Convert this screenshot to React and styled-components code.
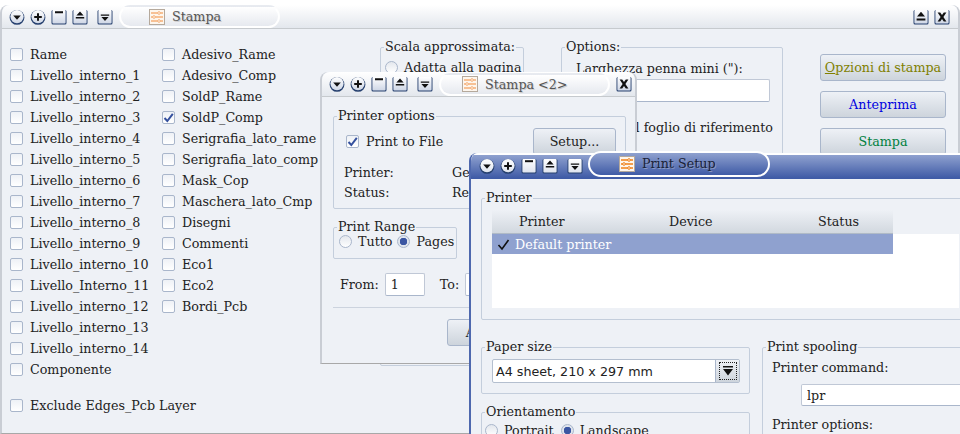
import styled, { createGlobalStyle } from 'styled-components';

const GlobalStyle = createGlobalStyle`
  html, body {
    margin: 0;
    padding: 0;
    background: #fff;
  }
  body {
    font-family: "DejaVu Serif", serif;
    font-size: 12.7px;
    color: #222;
  }
`;

const Desktop = styled.div`
  position: relative;
  width: 960px;
  height: 434px;
  overflow: hidden;
  background: #fff;
`;

const Window = styled.div`
  position: absolute;
  left: ${(p) => p.$left}px;
  top: ${(p) => p.$top}px;
  width: ${(p) => p.$width}px;
  height: ${(p) => p.$height}px;
  box-sizing: border-box;
  display: flex;
  flex-direction: column;
  background: #eef1f6;
  border-radius: 8px 8px 0 0;
  border-left: 2px solid ${(p) => (p.$active ? '#4e68ae' : '#c9cdd4')};
  border-right: 2px solid ${(p) => (p.$active ? '#4e68ae' : '#c9cdd4')};
  border-bottom: 1px solid #a8a8a8;
  overflow: ${(p) => (p.$active ? 'visible' : 'hidden')};
`;

const TitleBar = styled.div`
  flex: none;
  height: ${(p) => p.$height}px;
  box-sizing: border-box;
  display: flex;
  align-items: center;
  padding-left: ${(p) => p.$pad}px;
  border-radius: 8px 8px 0 0;
  background: ${(p) =>
    p.$active
      ? 'linear-gradient(#fff 0 2px, #8fa1cf 2px, #3f5ba6)'
      : 'linear-gradient(#ffffff, #e3e7ed)'};
  border-bottom: 1px solid ${(p) => (p.$active ? '#3f5ba6' : '#c6cace')};
`;

const Buttons = styled.div`
  display: flex;
  align-items: center;
  gap: 5px;
  margin: 0 ${(p) => p.$right || 0}px 0 ${(p) => p.$left || 0}px;
`;

const LeftButtons = styled(Buttons)`
  > :last-child {
    margin-left: 4px;
  }
`;

const Tab = styled.div`
  flex: none;
  width: ${(p) => p.$width}px;
  height: ${(p) => (p.$active ? 26 : 23)}px;
  margin-left: ${(p) => p.$offset}px;
  margin-bottom: ${(p) => (p.$active ? 4 : 0)}px;
  padding-left: ${(p) => p.$inset}px;
  box-sizing: border-box;
  display: flex;
  align-items: center;
  gap: 7px;
  border: 2px solid #fff;
  border-top-color: ${(p) => (p.$active ? '#fff' : 'transparent')};
  border-radius: 13px;
  color: ${(p) => (p.$active ? '#1a2238' : '#555')};
  text-shadow: ${(p) => (p.$active ? '1px 1px 0 #8b9ac2' : '1px 1px 0 #ccc')};
  background: ${(p) =>
    p.$active
      ? 'linear-gradient(#8fa1cf, #3f5ba6)'
      : 'linear-gradient(#ffffff, #e6e9ef)'};
`;

const Spacer = styled.div`
  flex: 1;
`;

const MainBody = styled.div`
  flex: 1;
  display: flex;
  min-height: 0;
  padding: 11px 0 0 8px;
`;

const LayerColumns = styled.div`
  flex: none;
  width: 370px;
  margin-top: 4px;
  display: flex;
  flex-direction: column;
`;

const LayerGrid = styled.div`
  display: grid;
  grid-auto-flow: column;
  grid-template-rows: repeat(16, 21px);
  grid-template-columns: 152px 1fr;
`;

const Check = styled.label`
  display: flex;
  align-items: center;
  gap: 7px;
  white-space: nowrap;
  height: 21px;
  margin-top: ${(p) => p.$gap || 0}px;
  color: #222;
`;

const Box = styled.span`
  flex: none;
  width: 13px;
  height: 13px;
  box-sizing: border-box;
  border: 1px solid #a9b6cb;
  border-radius: 2px;
  background: linear-gradient(#eef1f6, #ffffff);
  display: flex;
  align-items: center;
  justify-content: center;
`;

const Group = styled.fieldset`
  margin: 0;
  min-width: 0;
  box-sizing: border-box;
  border: 1px solid #c4cedc;
  border-radius: 2px;
  padding: ${(p) => p.$padding || '0'};
  width: ${(p) => (p.$width ? `${p.$width}px` : 'auto')};
  height: ${(p) => (p.$height ? `${p.$height}px` : 'auto')};
`;

// the caption sits 5px in from the frame, whatever padding the frame has
const Legend = styled.legend`
  padding: 0 1px;
  margin-left: ${(p) => 3 - (p.$inset || 0)}px;
  line-height: 14px;
  color: #222;
`;

const Radio = styled.label`
  display: inline-flex;
  align-items: center;
  gap: 6px;
  white-space: nowrap;
`;

const Dot = styled.span`
  flex: none;
  width: 13px;
  height: 13px;
  box-sizing: border-box;
  border-radius: 50%;
  border: 1px solid #a9b6cb;
  background: ${(p) =>
    p.$on
      ? 'radial-gradient(circle, #3b56a2 0 3.5px, #dfe4ec 4px)'
      : 'linear-gradient(#e3e7ed, #ffffff)'};
`;

const ScaleGroup = styled(Group)`
  padding: 6px 4px 0;
`;

const OptionsGroup = styled(Group)`
  margin-left: 37px;
  padding: 7px 12px 0 14px;
  display: block;
`;

const Field = styled.input`
  display: block;
  box-sizing: border-box;
  width: ${(p) => (p.$width ? `${p.$width}px` : '100%')};
  height: ${(p) => p.$height || 23}px;
  margin: ${(p) => p.$margin || '0'};
  border: 1px solid #c0c8d6;
  border-bottom-color: #a9b6cb;
  border-radius: 2px;
  padding: 0 5px;
  background: #fff;
  font: inherit;
  color: #222;
`;

const RightAligned = styled.div`
  margin: 18px -3px 0 -40px;
  text-align: right;
  white-space: nowrap;
`;

const ActionColumn = styled.div`
  flex: none;
  margin: 14px 0 0 37px;
  display: flex;
  flex-direction: column;
  gap: 10px;
`;

const Action = styled.button`
  width: ${(p) => p.$width || 126}px;
  height: 27px;
  padding: 0;
  box-sizing: border-box;
  border: 1px solid #a9b6cb;
  border-radius: 3px;
  background: linear-gradient(#eef1f6, #cdd4dc);
  font: inherit;
  color: ${(p) => p.$color || '#222'};
  white-space: nowrap;
`;

const DialogBody = styled.div`
  flex: 1;
  min-height: 0;
  padding: 12px 9px 0 11px;
  display: flex;
  flex-direction: column;
`;

const PrinterOptions = styled(Group)`
  height: 100px;
  padding: 5px 9px 0 12px;
`;

const SpreadRow = styled.div`
  display: flex;
  align-items: center;
  justify-content: space-between;
`;

const InfoRow = styled.div`
  display: flex;
  height: 20px;
  align-items: center;
  margin: ${(p) => p.$top || 0}px 0 0 -2px;
`;

const InfoName = styled.span`
  width: 108px;
`;

const RangeGroup = styled(Group)`
  width: 124px;
  height: 39px;
  margin-top: 11px;
  display: flex;
  align-items: center;
  gap: 5px;
  padding: 0 0 0 5px;
`;

const FromRow = styled.div`
  display: flex;
  align-items: center;
  margin: 14px 0 0 7px;
  gap: 6px;
`;

const ToLabel = styled.span`
  margin-left: 9px;
`;

const Divider = styled.div`
  height: 1px;
  background: #ccd3de;
  margin-top: 11px;
`;

const DialogFooter = styled.div`
  display: flex;
  padding: 11px 0 0 114px;
`;

const SetupBody = styled.div`
  flex: 1;
  min-height: 0;
  padding: 12px 0 0 10px;
  width: 560px;
`;

const PrinterGroup = styled(Group)`
  height: 129px;
  padding: 5px 0 9px 10px;
`;

const ListHead = styled.div`
  display: grid;
  grid-template-columns: 150px 149px 74px;
  width: 401px;
  height: 24px;
  box-sizing: border-box;
  align-items: center;
  padding-left: 27px;
  background: linear-gradient(#eef1f6, #d2d8df);
  border-bottom: 1px solid #b0bac6;
`;

const ListArea = styled.div`
  background: #fff;
  height: 74px;
  width: 467px;
`;

const ListRow = styled.div`
  display: flex;
  align-items: center;
  gap: 5px;
  width: 401px;
  height: 20px;
  padding-left: 5px;
  box-sizing: border-box;
  background: #8fa1cf;
  color: #fff;
`;

const PaperLayout = styled.div`
  display: flex;
  gap: 12px;
  margin-top: 20px;
`;

const PaperColumn = styled.div`
  flex: none;
  width: 269px;
  display: flex;
  flex-direction: column;
  gap: 11px;
`;

const Combo = styled.div`
  display: flex;
  height: 24px;
  box-sizing: border-box;
  border: 1px solid #b4bfcf;
  border-radius: 2px;
  background: #fff;
  font-family: "DejaVu Sans", sans-serif;
  align-items: center;
  padding-left: 3px;
  color: #222;
`;

const ComboText = styled.span`
  flex: 1;
`;

const ComboButton = styled.span`
  flex: none;
  width: 24px;
  height: 22px;
  box-sizing: border-box;
  background: linear-gradient(#eef1f6, #cdd4dc);
  border-left: 1px solid #a9b6cb;
  display: flex;
  align-items: center;
  justify-content: center;
`;

const FocusRing = styled.span`
  width: 18px;
  height: 18px;
  box-sizing: border-box;
  border: 1px dotted #222;
  display: flex;
  align-items: center;
  justify-content: center;
`;

const OrientGroup = styled(Group)`
  height: 40px;
  display: flex;
  gap: 7px;
  padding: 4px 0 0 3px;
`;

const SpoolGroup = styled(Group)`
  flex: 1;
  height: 100px;
  padding: 6px 0 0 9px;
`;

const OptionsLabel = styled.div`
  margin-top: 11px;
`;

const rows = [
  ['Rame', false],
  ['Livello_interno_1', false],
  ['Livello_interno_2', false],
  ['Livello_interno_3', false],
  ['Livello_interno_4', false],
  ['Livello_interno_5', false],
  ['Livello_interno_6', false],
  ['Livello_interno_7', false],
  ['Livello_interno_8', false],
  ['Livello_interno_9', false],
  ['Livello_interno_10', false],
  ['Livello_Interno_11', false],
  ['Livello_interno_12', false],
  ['Livello_interno_13', false],
  ['Livello_interno_14', false],
  ['Componente', false],
  ['Adesivo_Rame', false],
  ['Adesivo_Comp', false],
  ['SoldP_Rame', false],
  ['SoldP_Comp', true],
  ['Serigrafia_lato_rame', false],
  ['Serigrafia_lato_comp', false],
  ['Mask_Cop', false],
  ['Maschera_lato_Cmp', false],
  ['Disegni', false],
  ['Commenti', false],
  ['Eco1', false],
  ['Eco2', false],
  ['Bordi_Pcb', false],
];

const Tick = () => (
  <svg width="11" height="11" viewBox="0 0 11 11">
    <path d="M1.5 6 L4.3 9 L9.8 1.8" fill="none" stroke="#34509e" strokeWidth="2" />
  </svg>
);

const CheckItem = ({ label, checked, gap }) => (
  <Check $gap={gap}>
    <Box>{checked && <Tick />}</Box>
    {label}
  </Check>
);

const glyphs = {
  menu: <path d="M4.2 6.5h7.6L8 10.7z" fill="#111" />,
  plus: <path d="M7 4.2h2v2.8h2.8v2H9v2.8H7V9H4.2V7H7z" fill="#111" />,
  shade: <path d="M4 2.2h8v2H4z" fill="#111" />,
  up: <path d="M8 2.6L11.6 6.6H4.4zM3.8 8h8.4v1.4H3.8z" fill="#111" />,
  raise: <path d="M8 2.8L12 7.6H4zM3.6 9.4h8.8v2.2H3.6z" fill="#111" />,
  down: <path d="M3.8 5.4h8.4v1.4H3.8zM4.4 8h7.2L8 12z" fill="#111" />,
  close: <path d="M3.6 3.4h2.6L8 6l1.8-2.6h2.6L9.4 8l3 4.6H9.8L8 10l-1.8 2.6H3.6l3-4.6z" fill="#111" />,
};

const TitleIcon = ({ kind, active }) => {
  const round = kind === 'menu' || kind === 'plus';
  const fill = active ? 'url(#glowA)' : 'url(#glowB)';
  return (
    <svg width="16" height="16" viewBox="0 0 16 16">
      <defs>
        <linearGradient id="glowB" x1="0" y1="0" x2="0" y2="1">
          <stop offset="0" stopColor="#fff" />
          <stop offset="1" stopColor="#cfd7e6" />
        </linearGradient>
        <linearGradient id="glowA" x1="0" y1="0" x2="0" y2="1">
          <stop offset="0" stopColor="#fff" />
          <stop offset="1" stopColor="#dfe4ee" />
        </linearGradient>
      </defs>
      {round ? (
        <>
          <circle cx="8" cy="8.4" r="7.4" fill="#26406f" />
          <circle cx="8" cy="7.6" r="6.6" fill={fill} />
        </>
      ) : (
        <>
          <rect x="0.5" y="1" width="15" height="14.6" rx="1.5" fill="#26406f" />
          <rect x="1.4" y="1" width="13.2" height="13.4" rx="1" fill={fill} />
        </>
      )}
      {glyphs[kind]}
    </svg>
  );
};

const SheetIcon = ({ strong }) => {
  const line = strong ? '#f08018' : '#f5b078';
  return (
    <svg width="16" height="16" viewBox="0 0 16 16">
      <rect x="0.5" y="0.5" width="15" height="15" fill="#fdf6ee" stroke="#b5a99c" />
      <path d="M2 4h12M2 8h12M2 12h12" stroke={line} strokeWidth="1.4" />
      <circle cx="10" cy="4" r="1.3" fill="#fff" stroke={line} />
      <circle cx="5" cy="8" r="1.3" fill="#fff" stroke={line} />
      <circle cx="10" cy="12" r="1.3" fill="#fff" stroke={line} />
    </svg>
  );
};

const WindowButtons = ({ active }) => (
  <LeftButtons>
    <TitleIcon kind="menu" active={active} />
    <TitleIcon kind="plus" active={active} />
    <TitleIcon kind="shade" active={active} />
    <TitleIcon kind="up" active={active} />
    <TitleIcon kind="down" active={active} />
  </LeftButtons>
);

const MainWindow = () => (
  <Window $left={0} $top={5} $width={960} $height={429}>
    <TitleBar $height={24} $pad={7}>
      <WindowButtons />
      <Tab $width={161} $offset={6} $inset={28}>
        <SheetIcon />
        Stampa
      </Tab>
      <Spacer />
      <Buttons $right={8}>
        <TitleIcon kind="raise" />
        <TitleIcon kind="close" />
      </Buttons>
    </TitleBar>
    <MainBody>
      <LayerColumns>
        <LayerGrid>
          {rows.map(([label, checked]) => (
            <CheckItem key={label} label={label} checked={checked} />
          ))}
        </LayerGrid>
        <CheckItem label="Exclude Edges_Pcb Layer" gap={15} />
      </LayerColumns>
      <ScaleGroup $width={144} $height={326}>
        <Legend $inset={4}>Scala approssimata:</Legend>
        <Radio>
          <Dot />
          Adatta alla pagina
        </Radio>
      </ScaleGroup>
      <OptionsGroup $width={222} $height={326}>
        <Legend $inset={14}>Options:</Legend>
        <div>Larghezza penna mini ("):</div>
        <Field $height={23} $margin="3px 0 0" defaultValue="" />
        <RightAligned>Stampa il foglio di riferimento</RightAligned>
      </OptionsGroup>
      <ActionColumn>
        <Action $color="#808000">
          <u>O</u>pzioni di stampa
        </Action>
        <Action $color="#0000e0">Anteprima</Action>
        <Action $color="#008040">Stampa</Action>
      </ActionColumn>
    </MainBody>
  </Window>
);

const PrintWindow = () => (
  <Window $left={320} $top={72} $width={317} $height={292}>
    <TitleBar $height={25} $pad={7}>
      <WindowButtons />
      <Tab $width={171} $offset={6} $inset={21}>
        <SheetIcon />
        {'Stampa <2>'}
      </Tab>
      <Buttons $left={6}>
        <TitleIcon kind="close" />
      </Buttons>
    </TitleBar>
    <DialogBody>
      <PrinterOptions>
        <Legend $inset={12}>Printer options</Legend>
        <SpreadRow>
          <CheckItem label="Print to File" checked />
          <Action $width={83}>Setup...</Action>
        </SpreadRow>
        <InfoRow $top={7}>
          <InfoName>Printer:</InfoName>
          Generic
        </InfoRow>
        <InfoRow>
          <InfoName>Status:</InfoName>
          Ready
        </InfoRow>
      </PrinterOptions>
      <RangeGroup>
        <Legend $inset={5}>Print Range</Legend>
        <Radio>
          <Dot />
          Tutto
        </Radio>
        <Radio>
          <Dot $on />
          Pages
        </Radio>
      </RangeGroup>
      <FromRow>
        From:
        <Field $width={40} defaultValue="1" />
        <ToLabel>To:</ToLabel>
        <Field $width={40} defaultValue="" />
      </FromRow>
      <Divider />
      <DialogFooter>
        <Action $width={87}>Annulla</Action>
      </DialogFooter>
    </DialogBody>
  </Window>
);

const SetupWindow = () => (
  <Window $left={469} $top={153} $width={560} $height={290} $active>
    <TitleBar $height={26} $pad={8} $active>
      <WindowButtons active />
      <Tab $width={182} $offset={5} $inset={29} $active>
        <SheetIcon strong />
        Print Setup
      </Tab>
    </TitleBar>
    <SetupBody>
      <PrinterGroup>
        <Legend $inset={10}>Printer</Legend>
        <ListHead>
          <span>Printer</span>
          <span>Device</span>
          <span>Status</span>
        </ListHead>
        <ListArea>
          <ListRow>
            <svg width="13" height="13" viewBox="0 0 13 13">
              <path d="M1.5 7 L5 11 L11.5 2" fill="none" stroke="#111" strokeWidth="1.6" />
            </svg>
            Default printer
          </ListRow>
        </ListArea>
      </PrinterGroup>
      <PaperLayout>
        <PaperColumn>
          <Group $height={54} $padding="5px 9px 0 10px">
            <Legend $inset={10}>Paper size</Legend>
            <Combo>
              <ComboText>A4 sheet, 210 x 297 mm</ComboText>
              <ComboButton>
                <FocusRing>
                  <svg width="12" height="11" viewBox="0 0 12 11">
                    <path d="M1 0h10v1.5H1zM1 3h10L6 9.5z" fill="#111" />
                  </svg>
                </FocusRing>
              </ComboButton>
            </Combo>
          </Group>
          <OrientGroup>
            <Legend $inset={3}>Orientamento</Legend>
            <Radio>
              <Dot />
              Portrait
            </Radio>
            <Radio>
              <Dot $on />
              Landscape
            </Radio>
          </OrientGroup>
        </PaperColumn>
        <SpoolGroup>
          <Legend $inset={9}>Print spooling</Legend>
          <div>Printer command:</div>
          <Field $width={180} $height={22} $margin="9px 0 0 29px" defaultValue="lpr" />
          <OptionsLabel>Printer options:</OptionsLabel>
        </SpoolGroup>
      </PaperLayout>
    </SetupBody>
  </Window>
);

export default function App() {
  return (
    <>
      <GlobalStyle />
      <Desktop>
        <MainWindow />
        <PrintWindow />
        <SetupWindow />
      </Desktop>
    </>
  );
}
